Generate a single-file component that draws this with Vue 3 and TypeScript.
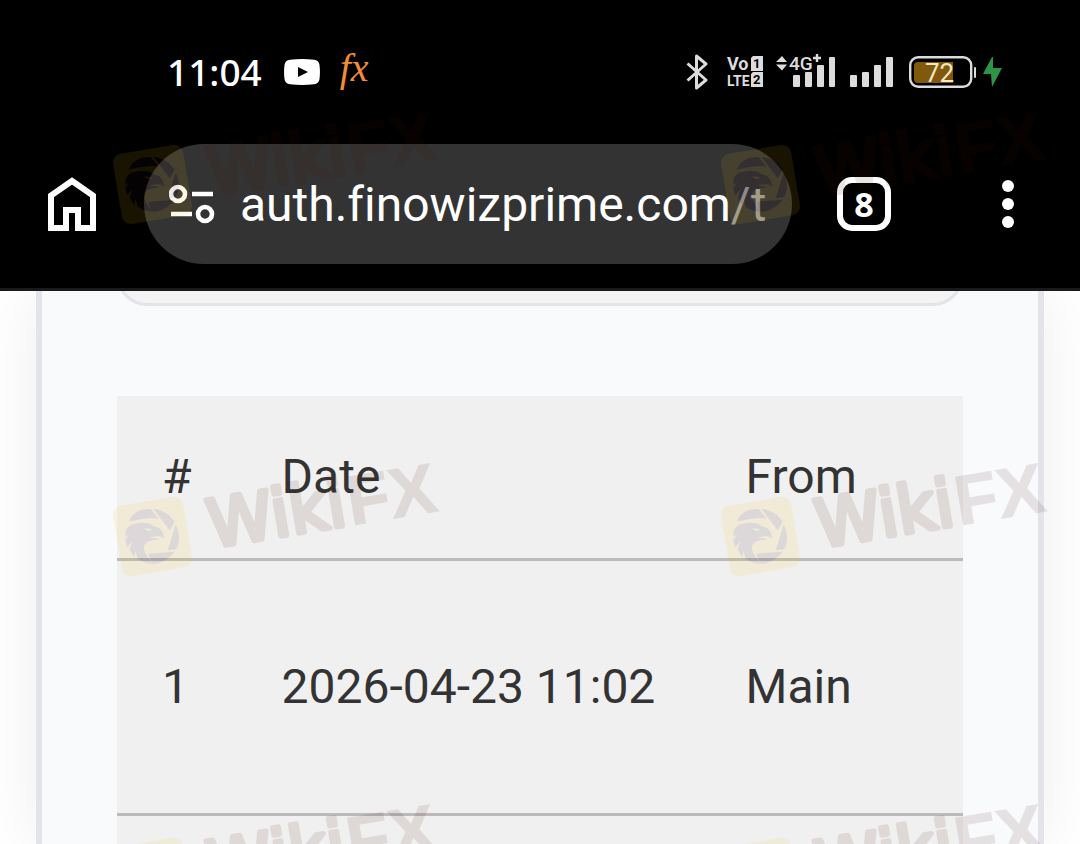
<script setup lang="ts">
interface Transfer {
  id: number
  date: string
  from: string
}

interface Mark {
  x: number
  y: number
}

const transfers: Transfer[] = [{ id: 1, date: '2026-04-23 11:02', from: 'Main' }]

const marks: Mark[] = [88, 440, 781].flatMap((y) => [
  { x: 100, y },
  { x: 708, y },
])
</script>

<template>
  <div class="screen">
    <header class="chrome">
      <div class="status">
        <div class="status-group">
          <span class="time">11:04</span>
          <svg class="video" width="36" height="26" viewBox="0 0 36 26" aria-hidden="true">
            <path d="M6 .8Q18-.6 30 .8Q35 1.400 35.500 6Q36.400 13 35.500 20Q35 24.600 30 25.200Q18 26.600 6 25.200Q1 24.600.5 20Q-.4 13 .5 6Q1 1.400 6 .8Z" fill="#fff" />
            <path d="M14 8v10l10-5z" fill="#000" />
          </svg>
          <span class="fx">fx</span>
        </div>
        <div class="status-group">
          <svg width="22" height="36" viewBox="0 0 22 36" aria-hidden="true">
            <path d="M1.500 9.500 20 26 10.500 34V2L20 10 1.500 26.500" fill="none" stroke="#dcdcdc" stroke-width="3" stroke-linejoin="round" />
          </svg>
          <svg class="volte" width="38" height="32" viewBox="0 0 38 32" aria-label="VoLTE">
            <text x="1" y="14" class="tiny-vo">Vo</text>
            <text x="1" y="30" class="tiny">LTE</text>
            <path d="M27 0h10v15H25V2zM27 16h10v15H25V18z" fill="#dcdcdc" />
            <text x="27" y="12" class="tiny-dark">1</text>
            <text x="27" y="28" class="tiny-dark">2</text>
          </svg>
          <svg class="signal-a" width="60" height="40" viewBox="0 0 60 40" aria-label="4G+">
            <path d="M0 10 6 4l5 6zM0 12.500l6 6 5-6z" fill="#dcdcdc" />
            <text x="13" y="18" class="net">4G</text>
            <path d="M37 6h8M41 2v8" stroke="#dcdcdc" stroke-width="2.400" />
            <g fill="#dcdcdc">
              <rect x="17" y="23" width="7" height="12" rx="1" />
              <rect x="29" y="20" width="7" height="15" rx="1" />
              <rect x="41" y="13" width="7" height="22" rx="1" />
              <rect x="53" y="5" width="6" height="30" rx="1" />
            </g>
          </svg>
          <svg class="signal-b" width="44" height="40" viewBox="0 0 44 40" aria-hidden="true">
            <g fill="#dcdcdc">
              <rect x="0" y="23" width="7" height="12" rx="1" />
              <rect x="12" y="20" width="7" height="15" rx="1" />
              <rect x="24" y="13" width="7" height="22" rx="1" />
              <rect x="36" y="5" width="7" height="30" rx="1" />
            </g>
          </svg>
          <svg class="battery" width="68" height="32" viewBox="0 0 68 32" aria-label="Battery 72">
            <rect x="1.200" y="1.200" width="61" height="29.600" rx="8" fill="none" stroke="#dcdcdc" stroke-width="2.400" />
            <path d="M9 6h35v21H9q-4 0-4-4V10q0-4 4-4z" fill="#80590c" />
            <rect x="65" y="11" width="2" height="11" rx="1" fill="#dcdcdc" />
            <text x="16" y="26" class="level">72</text>
          </svg>
          <svg class="bolt" width="20" height="32" viewBox="0 0 20 32" aria-hidden="true">
            <path d="M9 1 0 18h8l1 13 10-19h-9V1z" fill="#2d9446" />
          </svg>
        </div>
      </div>

      <nav class="toolbar">
        <button class="icon-button" type="button" aria-label="Home">
          <svg width="48" height="54" viewBox="0 0 48 54">
            <path d="M3 51V18.500L24 4l21 14.500V51H30V33H18v18z" fill="none" stroke="#fff" stroke-width="6" />
          </svg>
        </button>
        <button class="address" type="button">
          <svg class="tune" width="46" height="40" viewBox="0 0 46 40" aria-hidden="true">
            <g fill="none" stroke="#fff" stroke-width="4.600">
              <circle cx="9" cy="10" r="7" />
              <path d="M23 10h21M2 30h21" />
              <circle cx="36" cy="30" r="7" />
            </g>
          </svg>
          <span class="url">auth.finowizprime.com<span class="path">/t</span></span>
        </button>
        <button class="tabs" type="button" aria-label="8 open tabs">8</button>
        <button class="icon-button" type="button" aria-label="Menu">
          <svg width="12" height="48" viewBox="0 0 12 48" fill="#fff">
            <circle cx="6" cy="6" r="6" />
            <circle cx="6" cy="24" r="6" />
            <circle cx="6" cy="42" r="6" />
          </svg>
        </button>
      </nav>
    </header>

    <main class="page">
      <section class="card">
        <div class="panel"></div>
        <div class="table-area">
          <table>
            <thead>
              <tr>
                <th class="col-id" scope="col">#</th>
                <th class="col-date" scope="col">Date</th>
                <th scope="col">From</th>
              </tr>
            </thead>
            <tbody>
              <tr v-for="t in transfers" :key="t.id">
                <td>{{ t.id }}</td>
                <td>{{ t.date }}</td>
                <td>{{ t.from }}</td>
              </tr>
            </tbody>
          </table>
        </div>
      </section>
    </main>

    <svg class="marks" aria-hidden="true">
      <g v-for="m in marks" :key="`${m.x}-${m.y}`" :transform="`translate(${m.x} ${m.y})`" opacity=".1">
        <rect x="17" y="61" width="71" height="71" rx="9" transform="rotate(-9.500 52.500 96.500)" fill="#f0be0a" />
        <g transform="scale(.3333)" fill="#381420">
          <path d="M86 245C98 215 125 205 152 207L176 236C150 230 112 240 86 245Z" />
          <path d="M161 207C190 210 212 225 224 246L209 271Z" />
          <path d="M227 254C241 280 240 308 228 328L203 331Z" />
          <path d="M224 335C207 358 180 371 160 371C151 364 147 352 146 341Z" />
          <path d="M76 290C74 268 88 252 104 252C120 246 148 247 162 259C182 263 192 276 192 297L186 291C178 287 160 288 149 293C184 294 180 299 165 299C140 302 129 314 132 328C135 342 145 354 158 371C140 370 124 364 113 356L107 334L103 350Q93 340 89 328L98 302L82 322Q77 310 76 300L88 282Z" />
        </g>
        <path d="M44 88q5 1 8 1q-3 5-8-1z" fill="#f0be0a" />
        <g transform="translate(111 109) rotate(-9.500)">
          <text x="1" y="-1" class="mark-text mark-round">Wiki</text>
          <text x="142" class="mark-text mark-bold">FX</text>
        </g>
      </g>
    </svg>
  </div>
</template>

<style>
body {
  margin: 0;
}
</style>

<style scoped>
.screen {
  position: relative;
  display: flex;
  flex-direction: column;
  min-height: 100vh;
  overflow: hidden;
  background: #fff;
  font-family: Roboto, "Liberation Sans", sans-serif;
}

button {
  padding: 0;
  border: 0;
  background: none;
  color: #fff;
  font-family: inherit;
}

svg {
  display: block;
  flex: none;
}

.chrome {
  background: #000;
  border-bottom: 3px solid #1a1a1a;
  padding-bottom: 24px;
}

.status {
  display: flex;
  align-items: center;
  justify-content: space-between;
  height: 144px;
  padding: 0 77px 0 167px;
}

.status-group {
  display: flex;
  align-items: center;
}

.time {
  color: #fff;
  font: 500 37px/50px "Noto Sans", sans-serif;
}

.video {
  margin-left: 22px;
}

.fx {
  margin-left: 20px;
  padding-bottom: 8px;
  color: #f28c36;
  font: italic 40px/48px "Liberation Serif", serif;
}

.volte {
  margin-left: 18px;
}

.tiny {
  fill: #dcdcdc;
  font: bold 14px Roboto, sans-serif;
}

.tiny-vo {
  fill: #dcdcdc;
  font: bold 18px Roboto, sans-serif;
}

.tiny-dark {
  fill: #000;
  font: bold 13px Roboto, sans-serif;
}

.net {
  fill: #dcdcdc;
  font: 500 19px Roboto, sans-serif;
}

.signal-a {
  margin-left: 12px;
}

.signal-b {
  margin-left: 14px;
}

.battery {
  margin-left: 15px;
}

.level {
  fill: #f5e6c4;
  font: 400 26px Roboto, sans-serif;
}

.bolt {
  margin-left: 6px;
}

.toolbar {
  display: flex;
  align-items: center;
  padding: 0 66px 0 48px;
}

.address {
  display: flex;
  flex: 1;
  align-items: center;
  min-width: 0;
  height: 120px;
  margin: 0 45px 0 48px;
  padding: 0 25px;
  border-radius: 60px;
  background: #333;
  overflow: hidden;
}

.url {
  margin-left: 25px;
  padding-top: 2px;
  font-size: 48px;
  font-variant-ligatures: none;
  line-height: 60px;
  white-space: nowrap;
}

.path {
  color: #999;
}

.tabs {
  box-sizing: border-box;
  width: 54px;
  height: 54px;
  margin-right: 111px;
  border: 6px solid #fff;
  border-radius: 15px;
  font: bold 34px/42px "Open Sans", sans-serif;
}

.page {
  display: flex;
  flex: 1;
  padding: 0 36px;
  overflow: hidden;
}

.card {
  display: flex;
  flex: 1;
  flex-direction: column;
  padding: 0 75px;
  border: solid #e2e4e9;
  border-width: 0 6px;
  background: #f8fafc;
  box-shadow: 0 0 60px rgba(0, 0, 0, 0.07);
}

.panel {
  box-sizing: border-box;
  height: 75px;
  margin-top: -60px;
  border: 3px solid #e2e4e9;
  border-radius: 30px;
  background: #f4f4f5;
}

.table-area {
  flex: 1;
  margin-top: 90px;
  background: #f0f0f0;
}

table {
  width: 100%;
  border-collapse: separate;
  border-spacing: 0;
  color: #333;
  font-size: 48px;
  line-height: 72px;
}

th,
td {
  padding: 45px;
  border-bottom: 3px solid #bbb;
  font-weight: 400;
  text-align: left;
  white-space: nowrap;
}

td {
  padding: 90px 45px;
}

.col-id {
  width: 28px;
}

.col-date {
  width: 374px;
}

.marks {
  position: absolute;
  inset: 0;
  width: 100%;
  height: 100%;
  pointer-events: none;
}

.mark-text {
  fill: #481008;
  stroke: #481008;
}

.mark-bold {
  font: bold 70px "Liberation Sans", sans-serif;
  stroke-width: 1;
}

.mark-round {
  font: 400 66px "DejaVu Sans", sans-serif;
  stroke-width: 5;
  stroke-linejoin: round;
}
</style>
